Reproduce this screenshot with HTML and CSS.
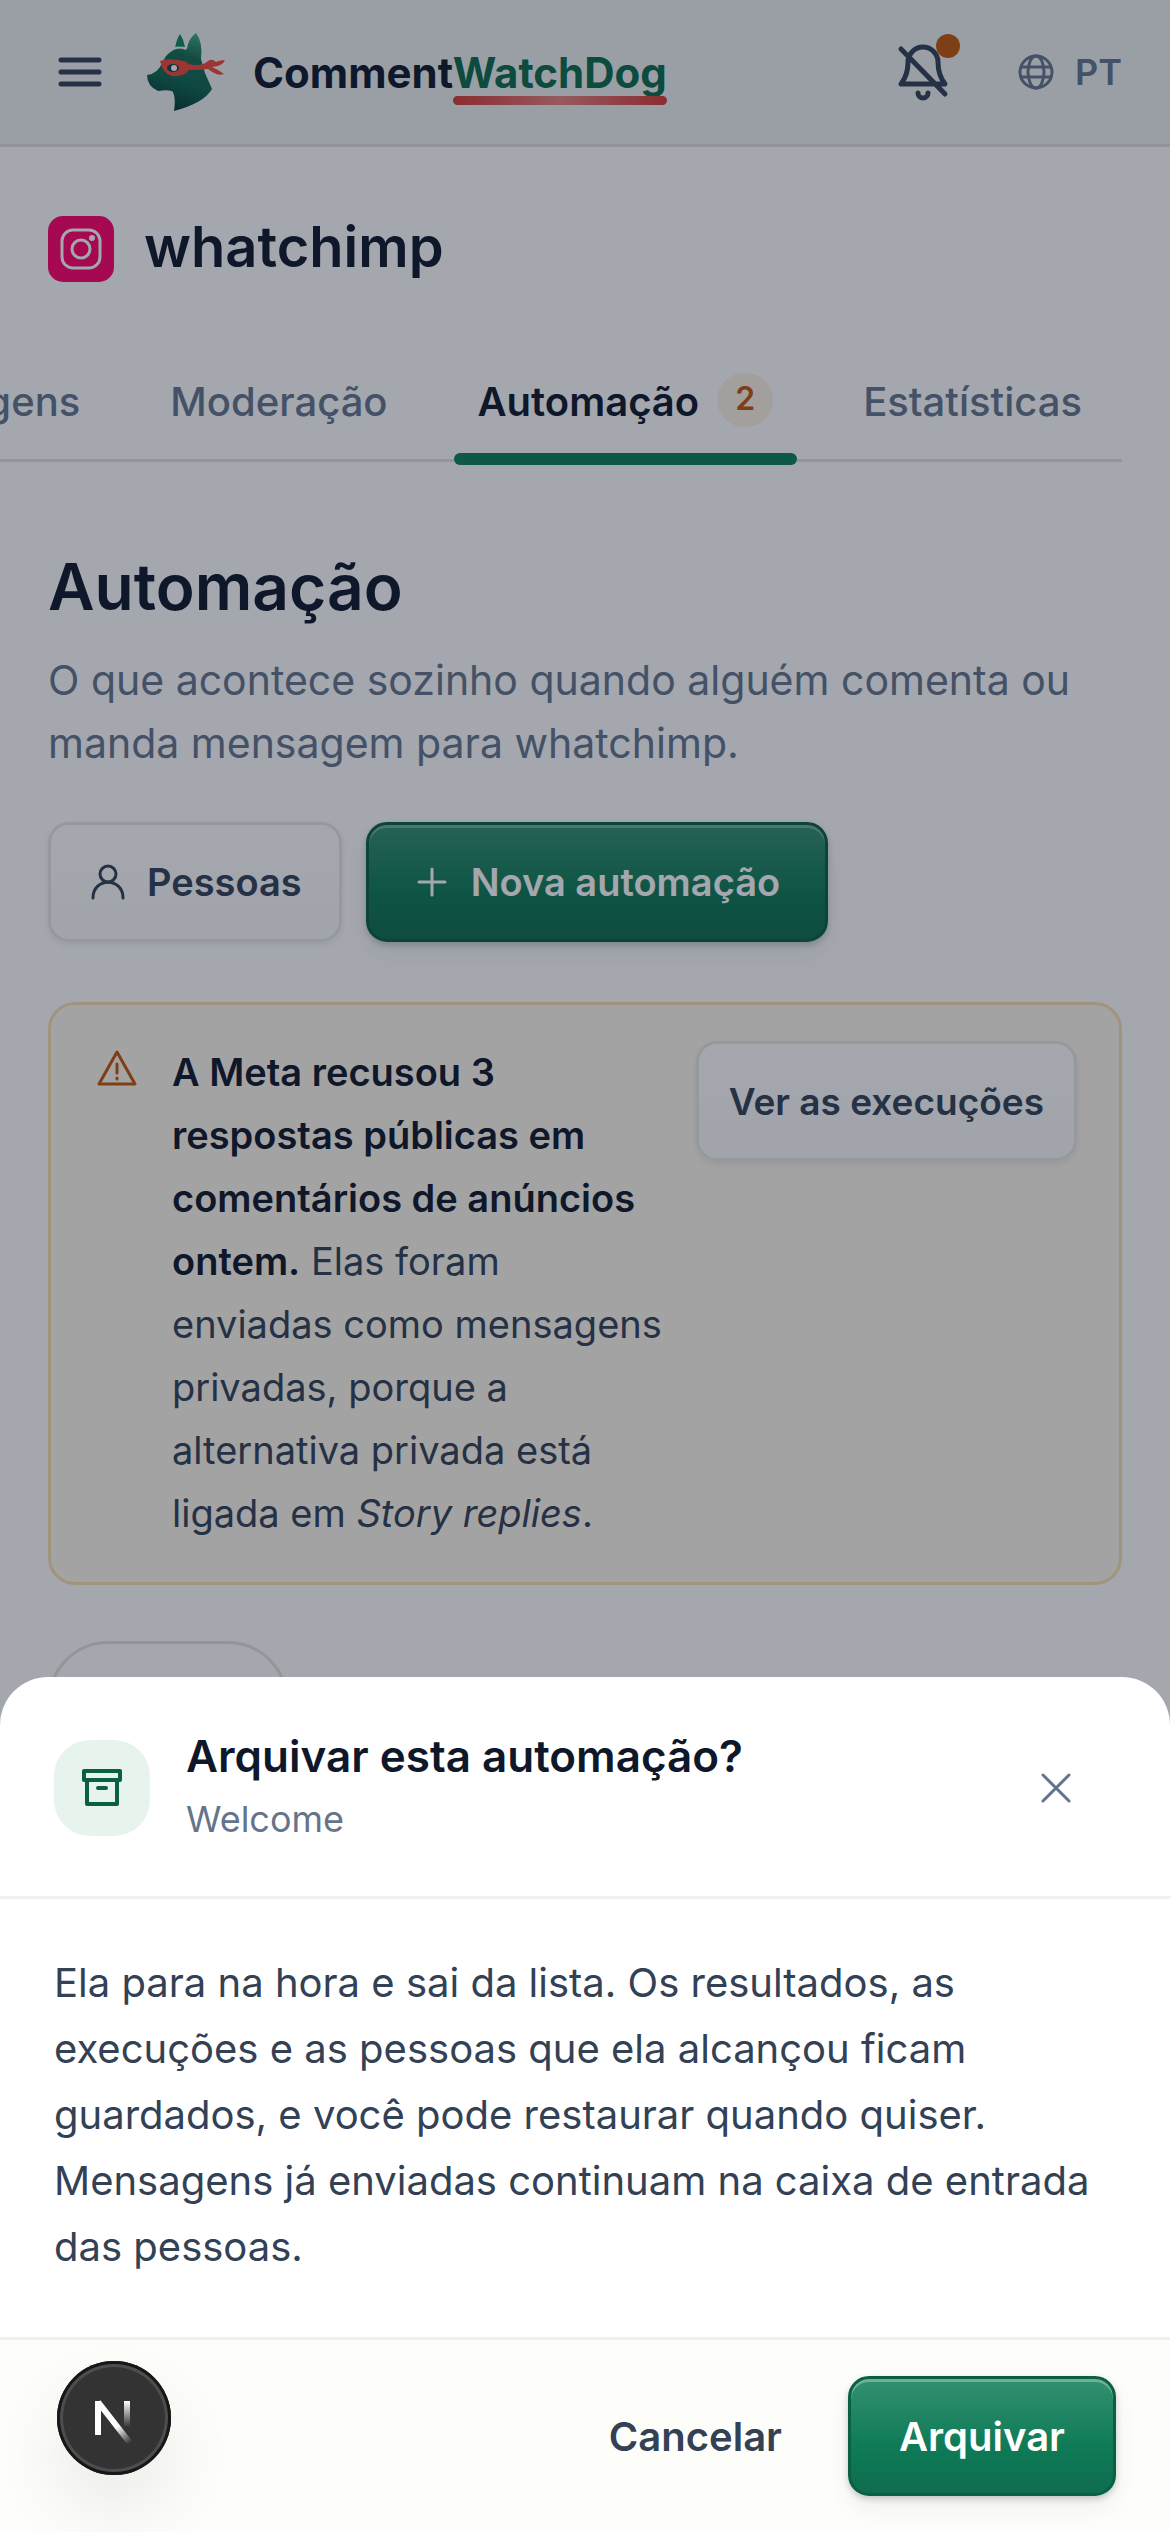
FILE: index.html
```html
<!DOCTYPE html>
<html lang="pt">
<head>
  <meta charset="UTF-8">
  <meta name="viewport" content="width=device-width, initial-scale=1.0">
  <title>Automação - CommentWatchDog</title>
  <link rel="stylesheet" href="styles.css">
</head>
<body>
  <header class="topbar">
    <button class="icon-btn menu-btn" aria-label="Menu">
      <svg width="44" height="32" viewBox="0 0 44 32" fill="none" stroke="currentColor" stroke-width="5" stroke-linecap="round"><path d="M3 4h38M3 16h38M3 28h38"/></svg>
    </button>
    <a class="brand" href="#">
      <svg class="brand-logo" width="80" height="80" viewBox="0 0 80 80">
        <defs>
          <linearGradient id="dog" x1="0.7" y1="0" x2="0.4" y2="1">
            <stop offset="0" stop-color="#3fa98a"/>
            <stop offset="0.3" stop-color="#17694f"/>
            <stop offset="0.6" stop-color="#0f6a52"/>
            <stop offset="1" stop-color="#043a34"/>
          </linearGradient>
        </defs>
        <path d="M29 17Q30 8 34 2Q38 8 39 15Q33 14 29 17Z" fill="#0d8a63"/>
        <path d="M17 29Q22 18 34 16Q38 16 41 17Q42 7 50 1Q57 10 55 27L59 41L66 57Q58 71 28 79Q30 67 27 60Q24 57 12 59Q1 54 1 43Q12 42 17 29Z" fill="url(#dog)"/>
        <path d="M23 20Q30 13 40 17" fill="none" stroke="#e6f4ef" stroke-width="2"/>
        <path d="M14 29Q20 26 32 28Q42 29 42 32Q56 35 62 29Q66 26 70 30Q74 28 79 28Q77 34 66 35Q73 38 78 42Q72 45 62 37Q54 38 43 38Q38 45 26 44Q17 42 14 29Z" fill="#f0493c"/>
        <ellipse cx="27" cy="36" rx="6" ry="4" fill="#0b4a3e"/>
        <circle cx="28" cy="36" r="3" fill="#ffffff"/>
      </svg>
      <span class="brand-name">Comment<span class="brand-accent">WatchDog</span></span>
    </a>
    <button class="icon-btn bell-btn" aria-label="Notificações">
      <svg width="54" height="60" viewBox="0 0 54 60" fill="none" stroke="currentColor" stroke-width="5" stroke-linecap="round" stroke-linejoin="round">
        <path d="M5 42Q12 33 12 20A15 15 0 0 1 42 20Q42 33 49 42ZM5 7L49 52M22 51A5 5 0 0 0 32 51"/>
      </svg>
      <span class="bell-dot"></span>
    </button>
    <button class="lang-btn">
      <svg width="36" height="36" viewBox="0 0 36 36" fill="none" stroke="currentColor" stroke-width="3"><circle cx="18" cy="18" r="16"/><ellipse cx="18" cy="18" rx="8" ry="16"/><path d="M3 13h30M3 23h30"/></svg>
      PT
    </button>
  </header>

  <main>
    <div class="account">
      <svg width="66" height="66" viewBox="0 0 66 66" fill="none" stroke="#ffffff" stroke-width="3">
        <rect width="66" height="66" rx="15" fill="#ff0069" stroke="none"/>
        <rect x="14" y="14" width="38" height="38" rx="11"/>
        <circle cx="33" cy="33" r="9"/>
        <circle cx="44" cy="22" r="3" fill="#ffffff" stroke="none"/>
      </svg>
      <h2>whatchimp</h2>
    </div>

    <nav class="tabs">
      <a href="#">Mensagens</a>
      <a href="#">Moderação</a>
      <a href="#" class="active">Automação <span class="count">2</span></a>
      <a href="#">Estatísticas</a>
    </nav>

    <h1>Automação</h1>
    <p class="intro">O que acontece sozinho quando alguém comenta ou manda mensagem para whatchimp.</p>

    <div class="actions">
      <button class="btn btn-light">
        <svg width="36" height="36" viewBox="0 0 36 36" fill="none" stroke="currentColor" stroke-width="3" stroke-linecap="round"><circle cx="18" cy="10" r="8"/><path d="M3 34C3 13 33 13 33 34"/></svg>
        Pessoas
      </button>
      <button class="btn btn-green">
        <svg width="36" height="36" viewBox="0 0 36 36" fill="none" stroke="currentColor" stroke-width="3" stroke-linecap="round"><path d="M18 5v26M5 18h26"/></svg>
        Nova automação
      </button>
    </div>

    <section class="alert">
      <svg class="alert-icon" width="42" height="42" viewBox="0 0 42 42" fill="none" stroke="currentColor" stroke-width="3" stroke-linecap="round" stroke-linejoin="round"><path d="M21 4L39 36H3ZM21 16v9M21 30v1"/></svg>
      <p><strong>A Meta recusou 3 respostas públicas em comentários de anúncios ontem.</strong> Elas foram<br>enviadas como mensagens<br>privadas, porque a<br>alternativa privada está<br>ligada em <em>Story replies</em>.</p>
      <button class="btn btn-light">Ver as execuções</button>
    </section>

    <button class="chip" aria-label="Filtro"></button>
  </main>

  <div class="backdrop">
    <div class="sheet" role="dialog" aria-labelledby="sheetTitle">
      <div class="sheet-header">
        <span class="sheet-icon">
          <svg width="42" height="42" viewBox="0 0 42 42" fill="none" stroke="currentColor" stroke-width="4" stroke-linejoin="round" stroke-linecap="round"><path d="M3 4h36v9H3ZM6 13v24h30V13M17 21h8"/></svg>
        </span>
        <div class="sheet-heading">
          <h3 id="sheetTitle">Arquivar esta automação?</h3>
          <p>Welcome</p>
        </div>
        <button class="icon-btn close-btn" aria-label="Fechar">
          <svg width="30" height="30" viewBox="0 0 30 30" fill="none" stroke="currentColor" stroke-width="3" stroke-linecap="round"><path d="M2 2l26 26M28 2L2 28"/></svg>
        </button>
      </div>
      <p class="sheet-body">Ela para na hora e sai da lista. Os resultados, as execuções e as pessoas que ela alcançou ficam guardados, e você pode restaurar quando quiser. Mensagens já enviadas continuam na caixa de entrada das pessoas.</p>
      <div class="sheet-footer">
        <button class="btn btn-text">Cancelar</button>
        <button class="btn btn-green">Arquivar</button>
      </div>
    </div>
  </div>

  <button class="dev-badge" aria-label="Next.js">
    <svg width="114" height="114" viewBox="0 0 114 114" fill="none" stroke-width="6">
      <defs>
        <linearGradient id="fadeDiagonal" gradientUnits="userSpaceOnUse" x1="60" y1="66" x2="73" y2="82">
          <stop offset="0" stop-color="#ffffff"/>
          <stop offset="1" stop-color="#ffffff" stop-opacity="0"/>
        </linearGradient>
        <linearGradient id="fadeStem" gradientUnits="userSpaceOnUse" x1="70" y1="40" x2="70" y2="66">
          <stop offset="0" stop-color="#ffffff"/>
          <stop offset="1" stop-color="#ffffff" stop-opacity="0"/>
        </linearGradient>
      </defs>
      <path d="M41 74V40" stroke="#ffffff"/>
      <path d="M41 41L73 82" stroke="url(#fadeDiagonal)"/>
      <path d="M70 40V66" stroke="url(#fadeStem)"/>
    </svg>
  </button>
</body>
</html>
```
FILE: styles.css
```css
* {
  box-sizing: border-box;
}
body {
  font-family: Inter, "Liberation Sans", sans-serif;
  font-size: 40px;
  line-height: 63px;
  color: #0f172a;
  background: #ffffff;
  margin: 0;
  height: 100vh;
  overflow: hidden;
}
h1, h2, h3, p {
  margin: 0;
}
h1, h2, h3 {
  font-weight: 600;
}
button {
  font-family: inherit;
  cursor: pointer;
}
svg {
  display: block;
  flex: none;
}
.topbar {
  display: flex;
  align-items: center;
  height: 147px;
  padding: 0 48px;
  background: #eff3f1;
  border-bottom: 3px solid #e3e4e1;
}
.icon-btn {
  display: flex;
  align-items: center;
  justify-content: center;
  background: none;
  border: none;
  padding: 0;
  color: #334155;
}
.menu-btn {
  width: 63px;
  margin-right: 35px;
}
.brand {
  display: flex;
  align-items: center;
  gap: 27px;
  margin-right: auto;
  color: #0f172a;
  font-size: 42px;
  font-weight: 700;
  text-decoration: none;
}
.brand-accent {
  position: relative;
  color: #0a6b4b;
}
.brand-accent::after {
  content: "";
  position: absolute;
  left: 0;
  right: 0;
  bottom: -7px;
  height: 9px;
  border-radius: 5px;
  background: linear-gradient(90deg, #d63a35, #e8837f 50%, #d63a35);
}
.bell-btn {
  position: relative;
  margin-right: 68px;
}
.bell-dot {
  position: absolute;
  top: -8px;
  right: -10px;
  width: 24px;
  height: 24px;
  border-radius: 50%;
  background: #c2570c;
}
.lang-btn {
  display: flex;
  align-items: center;
  gap: 21px;
  padding: 0;
  background: none;
  border: none;
  color: #64748b;
  font-size: 36px;
  font-weight: 600;
}
main {
  padding: 60px 48px 0;
}
.account {
  display: flex;
  align-items: center;
  gap: 30px;
}
.account svg {
  margin-top: 3px;
}
.account h2 {
  font-size: 56px;
  line-height: 81px;
}
.tabs {
  display: flex;
  justify-content: flex-end;
  gap: 42px;
  margin: 66px 0 0 -48px;
  padding-right: 16px;
  border-bottom: 3px solid #e3e4e1;
}
.tabs a {
  position: relative;
  flex: none;
  height: 105px;
  padding: 16px 24px 0;
  color: #64748b;
  font-weight: 500;
  text-decoration: none;
}
.tabs .active {
  display: flex;
  gap: 18px;
  color: #0f172a;
  font-weight: 600;
}
.tabs .active::after {
  content: "";
  position: absolute;
  left: 0;
  right: 0;
  bottom: -6px;
  height: 12px;
  border-radius: 6px;
  background: #0e8059;
}
.count {
  height: 54px;
  margin-top: 3px;
  padding: 0 18px;
  border-radius: 27px;
  background: #fdf3e3;
  color: #c2570c;
  font-size: 32px;
  line-height: 51px;
}
h1 {
  margin-top: 84px;
  font-size: 64px;
  line-height: 81px;
}
.intro {
  margin-top: 22px;
  color: #64748b;
  font-size: 41px;
}
.actions {
  display: flex;
  gap: 24px;
  margin-top: 47px;
}
.btn {
  display: flex;
  align-items: center;
  justify-content: center;
  gap: 21px;
  height: 120px;
  border: 3px solid transparent;
  border-radius: 21px;
  font-size: 38px;
  font-weight: 600;
  white-space: nowrap;
}
.btn-light {
  padding: 0 37px 0 39px;
  background: linear-gradient(#ffffff, #fafaf9);
  border-color: #e7e8e5;
  color: #334155;
  box-shadow: 0 3px 6px rgba(15, 23, 42, 0.08);
}
.btn-green {
  padding: 0 45px;
  background: linear-gradient(#33906f, #0e7a56 60%, #0f6d4f);
  border-color: #0b6044;
  color: #ffffff;
  box-shadow: inset 0 3px 0 rgba(255, 255, 255, 0.3), 0 3px 6px rgba(15, 23, 42, 0.2), 0 12px 24px rgba(15, 23, 42, 0.06);
}
.btn-text {
  padding: 0 36px;
  background: none;
  color: #334155;
}
.alert {
  display: flex;
  align-items: flex-start;
  margin-top: 60px;
  padding: 36px 42px 37px 45px;
  border: 3px solid #fbe0b0;
  border-radius: 27px;
  background: #fff8ed;
}
.alert-icon {
  margin: 7px 34px 0 0;
  color: #c2570c;
}
.alert p {
  flex: 1;
  color: #334155;
  font-size: 38px;
}
.alert strong {
  color: #0f172a;
  font-weight: 600;
}
.alert .btn {
  flex: none;
  margin-left: 21px;
  padding: 0 30px;
  font-size: 37px;
}
.chip {
  display: block;
  width: 240px;
  height: 120px;
  margin-top: 56px;
  border: 3px solid #e3e4e1;
  border-radius: 60px;
  background: #ffffff;
}
.backdrop {
  position: fixed;
  inset: 0;
  display: flex;
  align-items: flex-end;
  background: rgba(15, 23, 42, 0.38);
}
.sheet {
  width: 100%;
  background: #ffffff;
  border-radius: 48px 48px 0 0;
  overflow: hidden;
}
.sheet-header {
  display: flex;
  align-items: center;
  gap: 36px;
  padding: 48px 54px 45px;
  border-bottom: 3px solid #f0f0ef;
}
.sheet-icon {
  display: flex;
  align-items: center;
  justify-content: center;
  width: 96px;
  height: 96px;
  border-radius: 36px;
  background: #e7f4ed;
  color: #0b6044;
}
.sheet-heading {
  flex: 1;
}
.sheet-heading h3 {
  font-size: 44px;
}
.sheet-heading p {
  color: #64748b;
  font-size: 36px;
}
.close-btn {
  width: 120px;
  height: 120px;
  color: #64748b;
}
.sheet-body {
  padding: 51px 54px 57px;
  color: #334155;
  line-height: 66px;
}
.sheet-footer {
  display: flex;
  justify-content: flex-end;
  gap: 27px;
  padding: 36px 54px;
  border-top: 3px solid #f0f0ef;
  background: #fdfef9;
}
.sheet-footer .btn {
  font-size: 40px;
}
.sheet-footer .btn-green {
  padding: 0 48px;
}
.dev-badge {
  position: fixed;
  left: 57px;
  bottom: 57px;
  width: 114px;
  height: 114px;
  padding: 0;
  border: none;
  border-radius: 50%;
  background: #333333;
  box-shadow: inset 0 0 0 3px #171717, inset 0 0 0 6px #4d4d4d, 0 36px 72px rgba(0, 0, 0, 0.08);
}
```
